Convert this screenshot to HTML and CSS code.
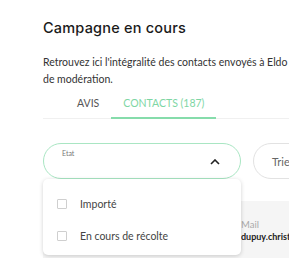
FILE: index.html
```html
<!DOCTYPE html>
<html>
<head>
    <title>Campagne en cours</title>
    <link rel="stylesheet" href="styles.css">
</head>
<body>
    <div class="page">
        <h1 class="title">Campagne en cours</h1>
        <p class="intro">Retrouvez ici l'intégralité des contacts envoyés à Eldo qui sont en attente</p>
        <p class="intro">de modération.</p>

        <div class="tabs">
            <div class="tab">AVIS</div>
            <div class="tab active">CONTACTS (187)</div>
        </div>

        <div class="filters">
            <div class="select open">
                <span class="select-label">Etat</span>
                <svg class="chevron" width="10" height="6" viewBox="0 0 10 6"><path d="M1 5 L5 1 L9 5" fill="none" stroke="#222" stroke-width="1.6"/></svg>
                <div class="dropdown">
                    <label class="option"><span class="checkbox"></span>Importé</label>
                    <label class="option"><span class="checkbox"></span>En cours de récolte</label>
                </div>
            </div>
            <div class="select sort">
                <span class="sort-text">Trier par</span>
            </div>
        </div>

        <div class="table">
            <div class="col col-name"></div>
            <div class="col col-mail">
                <div class="col-label">Mail</div>
                <div class="col-value">dupuy.christelle@gmail.com</div>
            </div>
        </div>
    </div>
</body>
</html>
```

FILE: styles.css
```css
* { margin: 0; padding: 0; box-sizing: border-box; }
body { background: #fff; font-family: 'Lato', sans-serif; color: #333; }
.page { width: 289px; height: 258px; overflow: hidden; padding: 18px 0 0 43px; }
.title { font-family: 'Inter', 'Open Sans', sans-serif; font-size: 14.5px; font-weight: 500; color: #1a1a1a; letter-spacing: 0.2px; line-height: 20px; margin-bottom: 16px; }
.intro { font-size: 10.5px; line-height: 17px; color: #333; white-space: nowrap; overflow: hidden; }
.tabs { display: flex; width: 380px; margin-top: 2px; padding-left: 22px; border-bottom: 1px solid #f0f0f0; }
.tab { padding: 7px 12px 8px; font-size: 10.5px; color: #555; border-bottom: 2px solid transparent; margin-bottom: -1px; }
.tab.active { color: #7ed6a4; border-bottom-color: #86dcab; }
.filters { display: flex; width: 380px; gap: 12px; margin-top: 24px; }
.select { position: relative; width: 198px; height: 36px; border: 1px solid #e2e2e2; border-radius: 18px; flex-shrink: 0; }
.select.open { border-color: #a9e6c3; }
.select-label { position: absolute; left: 18px; top: 5px; font-size: 7px; color: #777; }
.chevron { position: absolute; right: 20px; top: 15px; }
.sort { width: 160px; display: flex; align-items: center; padding-left: 18px; }
.sort-text { font-size: 11px; color: #666; }
.dropdown { position: absolute; left: -1px; top: 35px; width: 198px; height: 76px; background: #fff; border-radius: 5px; box-shadow: 0 1px 4px rgba(0, 0, 0, 0.18); z-index: 2; padding-top: 9px; }
.option { display: flex; align-items: center; height: 32px; padding-left: 14px; font-size: 10.5px; color: #444; }
.checkbox { width: 10px; height: 10px; border: 1px solid #cfcfcf; border-radius: 1px; margin-right: 13px; }
.table { display: flex; width: 380px; margin-top: 22px; background: #f5f5f5; height: 80px; padding-top: 18px; }
.col-name { width: 198px; flex-shrink: 0; }
.col-label { font-size: 9.5px; color: #aaa; }
.col-value { font-size: 9px; font-weight: 700; color: #222; margin-top: 1px; }
```
